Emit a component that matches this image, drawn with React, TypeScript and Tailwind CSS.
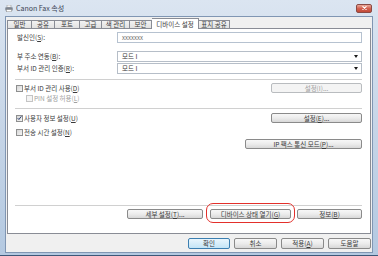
import React from "react";

function U({ c }: { c: string }) {
  return <span className="underline underline-offset-[1px] decoration-[0.5px]">{c}</span>;
}

function Check({ checked, disabled }: { checked?: boolean; disabled?: boolean }) {
  return (
    <div
      className={
        disabled
          ? "w-[7px] h-[7px] border border-[#c4c4c4] bg-[#f4f4f4] shrink-0"
          : "w-[7px] h-[7px] border border-[#8e8f8f] bg-linear-to-br from-[#d6d6d6] to-[#f4f4f4] shrink-0 flex items-center justify-center"
      }
    >
      {checked && (
        <svg width="6" height="6" viewBox="0 0 6 6">
          <path d="M0.8 3.2 L2.3 4.8 L5.3 0.9" stroke="#2c3f6e" strokeWidth="1.2" fill="none" />
        </svg>
      )}
    </div>
  );
}

function Btn({ className, children }: { className: string; children: React.ReactNode }) {
  return (
    <div
      className={
        "h-[10px] rounded-[2px] border border-[#8a8a8a] bg-linear-to-b from-[#f7f7f7] via-[#ececec] to-[#d8d8d8] flex items-center justify-center text-[6.5px] text-[#3a3a3a] " +
        className
      }
    >
      {children}
    </div>
  );
}

function Sel() {
  return (
    <div className="flex-1 h-[11px] border border-[#b6bec8] bg-white flex items-center pl-[4px] pr-[3px]">
      <span>모드 I</span>
      <svg className="ml-auto" width="4" height="3" viewBox="0 0 4 3">
        <path d="M0 0 H4 L2 3 Z" fill="#1a1a1a" />
      </svg>
    </div>
  );
}

export default function App() {
  return (
    <div className="w-[378px] h-[256px] overflow-hidden flex flex-col border-b border-[#3d5878] bg-linear-to-b from-[#dbe5f1] via-[#c6d5e7] to-[#b4c9e1] font-[family-name:'Noto_Sans_CJK_KR','Noto_Sans',sans-serif] text-[#3a3a3a] text-[6.5px] leading-none">
      {/* title bar */}
      <div className="h-[16px] shrink-0 flex items-center pl-[5px] pr-[6px]">
        <svg width="8" height="7" viewBox="0 0 8 7">
          <rect x="2" y="0" width="4" height="2.5" fill="#f4f4f4" stroke="#8a8a8a" strokeWidth="0.5" />
          <rect x="0.3" y="2.3" width="7.4" height="3.2" rx="0.6" fill="#7d8590" />
          <rect x="1.5" y="4.6" width="5" height="2.2" fill="#ffffff" stroke="#8a8a8a" strokeWidth="0.5" />
        </svg>
        <span className="ml-[3px] text-[7px] text-[#3a4352]">Canon Fax 속성</span>
        <div className="ml-auto w-[16px] h-[9px] rounded-[2px] border border-[#8a4a44] bg-linear-to-b from-[#e9a99b] via-[#d2604f] to-[#c24a37] flex items-center justify-center">
          <svg width="5" height="4" viewBox="0 0 5 4">
            <path d="M0.5 0.3 L4.5 3.7 M4.5 0.3 L0.5 3.7" stroke="#ffffff" strokeWidth="1.1" />
          </svg>
        </div>
      </div>

      {/* body */}
      <div className="flex-1 flex px-[5px] pb-[2px]">
        <div className="flex-1 border border-[#8096b3] bg-[#f0f0f0] flex flex-col px-[1px]">
          {/* tabs */}
          <div className="mt-[1px] h-[10px] flex items-end relative z-10">
            <div className="w-[25px] h-[8px] border border-b-0 border-[#898c95] bg-linear-to-b from-[#f2f2f2] to-[#e1e1e1] flex items-center justify-center">일반</div>
            <div className="w-[23px] h-[8px] border border-l-0 border-b-0 border-[#898c95] bg-linear-to-b from-[#f2f2f2] to-[#e1e1e1] flex items-center justify-center">공유</div>
            <div className="w-[25px] h-[8px] border border-l-0 border-b-0 border-[#898c95] bg-linear-to-b from-[#f2f2f2] to-[#e1e1e1] flex items-center justify-center">포트</div>
            <div className="w-[22px] h-[8px] border border-l-0 border-b-0 border-[#898c95] bg-linear-to-b from-[#f2f2f2] to-[#e1e1e1] flex items-center justify-center">고급</div>
            <div className="w-[28px] h-[8px] border border-l-0 border-b-0 border-[#898c95] bg-linear-to-b from-[#f2f2f2] to-[#e1e1e1] flex items-center justify-center">색 관리</div>
            <div className="w-[22px] h-[8px] border border-l-0 border-b-0 border-[#898c95] bg-linear-to-b from-[#f2f2f2] to-[#e1e1e1] flex items-center justify-center">보안</div>
            <div className="w-[47px] h-[11px] -mb-[1px] border border-l-0 border-b-0 border-[#898c95] bg-white flex items-center justify-center">디바이스 설정</div>
            <div className="w-[31px] h-[8px] border border-l-0 border-b-0 border-[#898c95] bg-linear-to-b from-[#f2f2f2] to-[#e1e1e1] flex items-center justify-center">표지 공유</div>
          </div>

          {/* panel */}
          <div className="h-[206px] shrink-0 border border-[#898c95] bg-white flex flex-col pl-[8px] pr-[8px] pb-[14px]">
            <div className="mt-[3px] h-[11px] flex items-center">
              <div className="w-[101px] pl-[1px]">발신인(<U c="S" />):</div>
              <div className="flex-1 h-[11px] border border-[#b6c2d0] bg-white flex items-center pl-[4px] text-[6px] text-[#666]">xxxxxxx</div>
            </div>
            <div className="mt-[8px] h-[11px] flex items-center">
              <div className="w-[101px] pl-[1px]">부 주소 연동(<U c="B" />):</div>
              <Sel />
            </div>
            <div className="mt-[1px] h-[11px] flex items-center">
              <div className="w-[101px] pl-[1px]">부서 ID 관리 인증(<U c="R" />):</div>
              <Sel />
            </div>
            <div className="mt-[5px] h-[1px] -ml-[1px] bg-[#d0d0d0]" />
            <div className="mt-[3px] h-[10px] flex items-center">
              <Check />
              <span className="ml-[1px]">부서 ID 관리 사용(<U c="D" />)</span>
              <div className="ml-auto w-[91px] h-[10px] rounded-[2px] border border-[#b9bcbf] bg-[#f4f4f4] flex items-center justify-center text-[#a0a0a0]">설정(I)...</div>
            </div>
            <div className="mt-[1px] h-[9px] flex items-center pl-[10px] text-[#a0a0a0]">
              <Check disabled />
              <span className="ml-[1px]">PIN 설정 허용(<U c="L" />)</span>
            </div>
            <div className="mt-[5px] h-[1px] -ml-[1px] bg-[#d0d0d0]" />
            <div className="mt-[4px] h-[10px] flex items-center">
              <Check checked />
              <span className="ml-[1px]">사용자 정보 설정(<U c="U" />)</span>
              <Btn className="ml-auto w-[91px]">설정(<U c="E" />)...</Btn>
            </div>
            <div className="mt-[4px] h-[10px] flex items-center">
              <Check />
              <span className="ml-[1px]">전송 시간 설정(<U c="N" />)</span>
            </div>
            <div className="mt-[2px] h-[10px] flex justify-end">
              <Btn className="w-[117px]">IP 팩스 통신 모드(<U c="P" />)...</Btn>
            </div>
            <div className="flex-1" />
            <div className="h-[1px] -ml-[1px] bg-[#d0d0d0]" />
            <div className="mt-[3px] h-[10px] flex justify-end">
              <Btn className="w-[76px]">세부 설정(<U c="T" />)...</Btn>
              <div className="relative ml-[7px]">
                <Btn className="w-[81px]">디바이스 상태 열기(<U c="G" />)</Btn>
                <div className="absolute -left-[4px] -right-[4px] -top-[6px] -bottom-[4px] rounded-[7px] border-[1.5px] border-[#e3302b]" />
              </div>
              <Btn className="ml-[6px] w-[65px]">정보(<U c="B" />)</Btn>
            </div>
          </div>

          {/* bottom buttons */}
          <div className="mt-[4px] h-[11px] flex justify-end gap-[4px]">
            <div className="w-[42px] h-[11px] rounded-[2px] border border-[#3c7fb1] bg-linear-to-b from-[#eaf6fd] to-[#c4e5f6] flex items-center justify-center">확인</div>
            <Btn className="h-[11px] w-[43px]">취소</Btn>
            <Btn className="h-[11px] w-[43px]">적용(<U c="A" />)</Btn>
            <Btn className="h-[11px] w-[43px]">도움말</Btn>
          </div>
        </div>
      </div>
    </div>
  );
}
